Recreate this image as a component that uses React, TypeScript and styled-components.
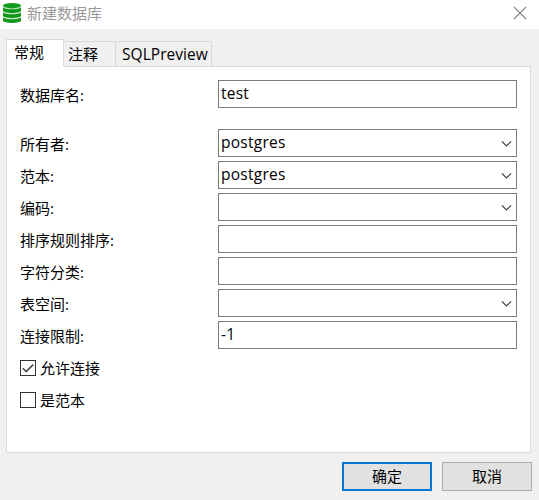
import React from "react";
import styled, { createGlobalStyle } from "styled-components";

const GlobalStyle = createGlobalStyle`
  * { box-sizing: border-box; }
  body { margin: 0; background: #f0f0f0; }
`;

const Dialog = styled.div`
  width: 539px;
  height: 500px;
  overflow: hidden;
  display: flex;
  flex-direction: column;
  background: #f0f0f0;
  color: #000;
  font-family: "Open Sans", "Noto Sans CJK SC", sans-serif;
  font-size: 15px;
  line-height: 20px;
  white-space: nowrap;
`;

const TitleBar = styled.header`
  height: 29px;
  flex: none;
  display: flex;
  align-items: center;
  padding: 0 12px 3px 3px;
  background: #fff;
  color: #999;
`;

const Title = styled.span`
  flex: 1;
  margin-left: 6px;
`;

const CloseButton = styled.button`
  display: flex;
  width: 14px;
  height: 14px;
  padding: 0;
  border: 0;
  background: none;
`;

const Tabs = styled.nav`
  display: flex;
  align-items: flex-end;
  height: 28px;
  flex: none;
  margin: 10px 0 -1px 6px;
`;

const Tab = styled.button<{ $active?: boolean; $width: number }>`
  width: ${(p) => p.$width}px;
  height: ${(p) => (p.$active ? 28 : 26)}px;
  padding: ${(p) => (p.$active ? "0 0 2px 7px" : "0 0 1px 4px")};
  border: 1px solid #d9d9d9;
  border-left-width: ${(p) => (p.$active ? 1 : 0)}px;
  border-bottom-color: ${(p) => (p.$active ? "#fff" : "#d9d9d9")};
  background: ${(p) => (p.$active ? "#fff" : "#f0f0f0")};
  color: inherit;
  font: inherit;
  text-align: left;
  position: relative;
`;

const LatinTabText = styled.span`
  margin-left: 2px;
  font-size: 15.5px;
  letter-spacing: 0.05px;
`;

const Panel = styled.main`
  width: 525px;
  height: 387px;
  flex: none;
  margin-left: 6px;
  padding: 13px;
  border: 1px solid #d9d9d9;
  background: #fff;
  display: flex;
  flex-direction: column;
  gap: 4px;
`;

const Row = styled.div<{ $spaced?: boolean }>`
  display: grid;
  grid-template-columns: 198px 299px;
  align-items: center;
  height: 28px;
  margin-bottom: ${(p) => (p.$spaced ? 17 : 0)}px;
`;

const Label = styled.label`
  padding-top: 1px;
`;

const Field = styled.div`
  height: 28px;
  display: flex;
  align-items: center;
  justify-content: space-between;
  padding: 0 4px 0 2px;
  border: 1px solid #7a7a7a;
  background: #fff;
  font-size: 15.5px;
  letter-spacing: 0.25px;
`;

const FieldValue = styled.span`
  padding-bottom: 2px;
`;

const CheckRow = styled.label`
  display: flex;
  align-items: center;
  gap: 4px;
  height: 28px;
`;

const CheckBox = styled.span`
  width: 16px;
  height: 16px;
  margin-top: 2px;
  display: flex;
  border: 1px solid #333;
`;

const CheckText = styled.span`
  padding-top: 2px;
`;

const Footer = styled.footer`
  display: flex;
  justify-content: flex-end;
  gap: 10px;
  padding: 9px 7px 0 0;
`;

const Button = styled.button<{ $primary?: boolean }>`
  width: 90px;
  height: 29px;
  padding: 0 0 2px;
  border: ${(p) => (p.$primary ? "2px solid #0078d7" : "1px solid #adadad")};
  background: #e1e1e1;
  color: #000;
  font: inherit;
`;

const DatabaseIcon = () => (
  <svg width="18" height="20" viewBox="0 0 18 20">
    <path d="M0.5 3v14c0 1.7 4 2.6 8.5 2.6s8.5-.9 8.5-2.6V3z" fill="#b9e6bc" />
    <ellipse cx="9" cy="2.7" rx="9" ry="2.7" fill="#159b1c" />
    {[3.5, 8.5, 13.5].map((y) => (
      <path
        key={y}
        d={`M0 ${y + 0.7}c1 1.4 4.4 2.1 9 2.1s8-.7 9-2.1v3.6c-1 1.5-4.4 2.1-9 2.1s-8-.6-9-2.1z`}
        fill="#109618"
      />
    ))}
  </svg>
);

const CloseIcon = () => (
  <svg width="14" height="14" viewBox="0 0 14 14">
    <path d="M1 1l12 12M13 1L1 13" stroke="#888" strokeWidth="1.1" />
  </svg>
);

const Chevron = () => (
  <svg width="11" height="9" viewBox="0 0 11 9">
    <path d="M1 2.5L5.5 7 10 2.5" fill="none" stroke="#444" strokeWidth="1.2" />
  </svg>
);

const CheckIcon = () => (
  <svg width="14" height="14" viewBox="0 0 14 14">
    <path d="M1.8 7.2l3.4 3.4 7-7" fill="none" stroke="#444" strokeWidth="1.5" />
  </svg>
);

const fields = [
  { label: "数据库名:", value: "test", spaced: true },
  { label: "所有者:", value: "postgres", combo: true },
  { label: "范本:", value: "postgres", combo: true },
  { label: "编码:", value: "", combo: true },
  { label: "排序规则排序:", value: "" },
  { label: "字符分类:", value: "" },
  { label: "表空间:", value: "", combo: true },
  { label: "连接限制:", value: "-1" },
];

export default function App() {
  return (
    <>
      <GlobalStyle />
      <Dialog>
        <TitleBar>
          <DatabaseIcon />
          <Title>新建数据库</Title>
          <CloseButton aria-label="关闭">
            <CloseIcon />
          </CloseButton>
        </TitleBar>
        <Tabs>
          <Tab $active $width={58}>常规</Tab>
          <Tab $width={52}>注释</Tab>
          <Tab $width={96}>
            <LatinTabText>SQLPreview</LatinTabText>
          </Tab>
        </Tabs>
        <Panel>
          {fields.map((f) => (
            <Row key={f.label} $spaced={f.spaced}>
              <Label>{f.label}</Label>
              <Field>
                <FieldValue>{f.value}</FieldValue>
                {f.combo && <Chevron />}
              </Field>
            </Row>
          ))}
          <CheckRow>
            <CheckBox>
              <CheckIcon />
            </CheckBox>
            <CheckText>允许连接</CheckText>
          </CheckRow>
          <CheckRow>
            <CheckBox />
            <CheckText>是范本</CheckText>
          </CheckRow>
        </Panel>
        <Footer>
          <Button $primary>确定</Button>
          <Button>取消</Button>
        </Footer>
      </Dialog>
    </>
  );
}
